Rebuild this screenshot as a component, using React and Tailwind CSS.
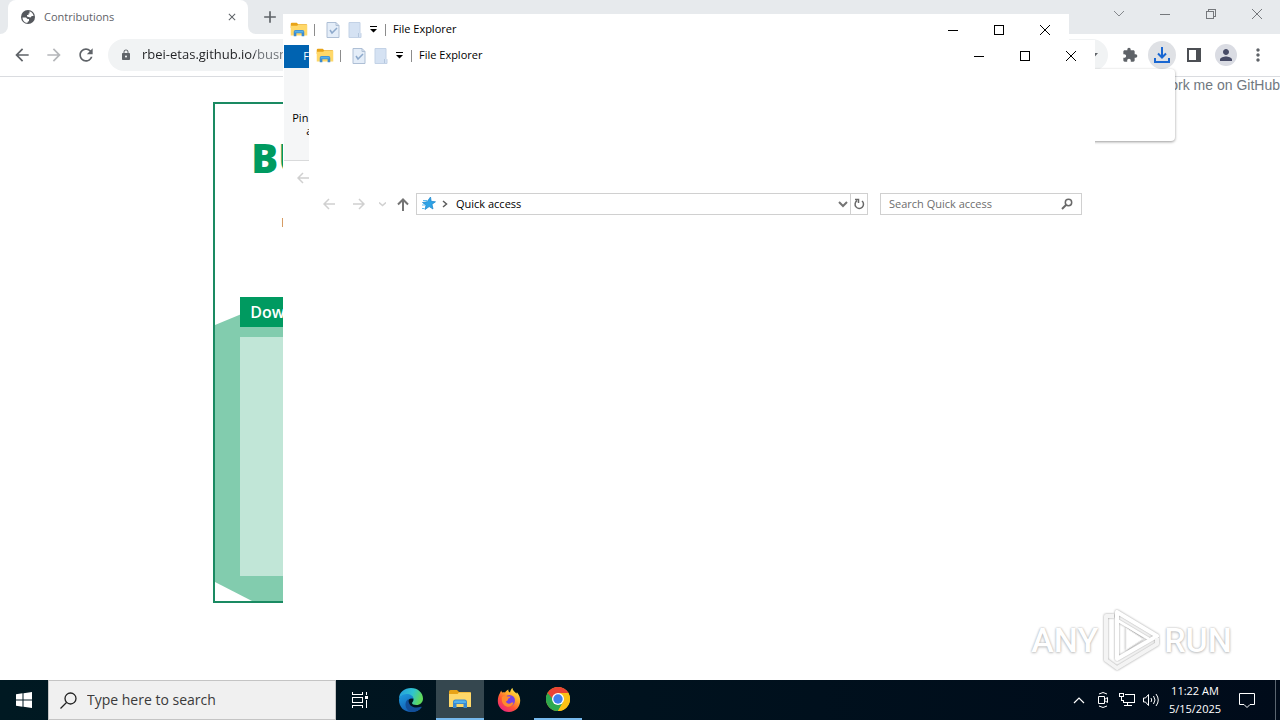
import React, { useState } from "react";
import {
  MdArrowBack,
  MdArrowForward,
  MdRefresh,
  MdLock,
  MdExtension,
  MdMoreVert,
  MdPerson,
  MdClose,
  MdAdd,
} from "react-icons/md";

function FolderIcon({ className }) {
  return (
    <svg viewBox="0 0 24 20" className={className} aria-hidden="true">
      <path d="M1 2.500Q1 1 2.500 1H9l2 2h11.500v5H1z" fill="#e8a317" />
      <path d="M1 5h8.500l1.500-1.500H23V18H1z" fill="#ffd869" />
      <path d="M5 19v-6q0-2.500 2.500-2.500h9Q19 10.500 19 13v6h-3.500v-4h-7v4z" fill="#3b8ad0" />
      <path d="M6 13q0-1.500 1.500-1.500h9q1.500 0 1.500 1.500v1H6z" fill="#55b1ea" />
    </svg>
  );
}

function GlobeIcon() {
  return (
    <svg width="16" height="16" viewBox="0 0 16 16" aria-hidden="true">
      <circle cx="8" cy="8" r="7" fill="#55585d" />
      <path d="M2.500 8.500h3.500l1.500 1.500h1.500v2l-1.500 1v1C4.500 13.800 2.500 11.500 2.500 8.500z" fill="#fff" />
      <path d="M9.500 2.300c2.200.7 3.800 2.500 4.100 4.700h-1.800l-1.300 1.500L8.500 8 7 7.500V6h1.500V4.500h1z" fill="#fff" />
    </svg>
  );
}

function WindowButtons({ restore = false, className = "" }) {
  return (
    <div className={`flex ${className}`}>
      <button aria-label="Minimize" className="flex w-[46px] items-center justify-center">
        <svg width="10" height="10" viewBox="0 0 10 10" stroke="currentColor" shapeRendering="crispEdges">
          <path d="M0 5.500h10" />
        </svg>
      </button>
      <button aria-label="Maximize" className="flex w-[46px] items-center justify-center">
        <svg width="10" height="10" viewBox="0 0 10 10" fill="none" stroke="currentColor" shapeRendering="crispEdges">
          {restore ? <path d="M.5 2.500h7v7h-7zM2.500 2.500v-2h7v7h-2" /> : <path d="M.5.5h9v9h-9z" />}
        </svg>
      </button>
      <button aria-label="Close" className="flex w-[46px] items-center justify-center">
        <svg width="10" height="10" viewBox="0 0 10 10" stroke="currentColor">
          <path d="M0 0l10 10M10 0L0 10" />
        </svg>
      </button>
    </div>
  );
}

function BrowserTabs() {
  return (
    <div className="flex h-[34px] shrink-0 bg-linear-to-b from-[#e7eaed] from-50% to-white to-50%">
      <div className="w-2 rounded-br-lg bg-[#e7eaed]" />
      <div className="flex w-60 items-center rounded-t-lg bg-white pr-2.5 pl-3 text-[#5f6368]">
        <GlobeIcon />
        <span className="ml-2 flex-1 text-[11px]">Contributions</span>
        <button aria-label="Close tab">
          <MdClose className="size-3" />
        </button>
      </div>
      <div className="flex flex-1 items-center rounded-bl-lg bg-[#e7eaed]">
        <button aria-label="New tab" className="ml-3 text-[#5f6368]">
          <MdAdd className="size-5" />
        </button>
        <button aria-label="Search tabs" className="ml-auto flex h-7 w-[46px] items-center justify-center self-start text-[#85888c]">
          <svg width="12" height="8" viewBox="0 0 12 8" fill="none" stroke="currentColor">
            <path d="M1 1l5 5 5-5" />
          </svg>
        </button>
        <WindowButtons restore className="h-7 self-start text-[#75787c]" />
      </div>
    </div>
  );
}

function BrowserToolbar() {
  const [url, setUrl] = useState("rbei-etas.github.io/busmaster/contributions.html");
  return (
    <div className="flex h-[43px] shrink-0 items-center border-b border-[#dadce0] bg-white pr-1.5 text-[#5f6368]">
      <button aria-label="Back" className="ml-3">
        <MdArrowBack className="size-5" />
      </button>
      <button aria-label="Forward" className="ml-3 text-[#b5b7ba]">
        <MdArrowForward className="size-5" />
      </button>
      <button aria-label="Reload" className="ml-3">
        <MdRefresh className="size-5" />
      </button>
      <div className="ml-3 flex h-8 flex-1 items-center rounded-full bg-[#f1f3f4] pr-1.5 pl-3">
        <MdLock className="size-3" />
        <input
          aria-label="Address"
          value={url}
          onChange={(e) => setUrl(e.target.value)}
          className="ml-[10px] flex-1 bg-linear-to-r from-[#202124] from-[113px] to-[#6b6f74] to-[113px] bg-clip-text text-[13px] text-transparent outline-none"
        />
        <svg width="14" height="8" viewBox="0 0 14 8" fill="currentColor">
          <path d="M3 2h7L6.500 6z" />
        </svg>
      </div>
      <div className="ml-1.5 flex">
        <button aria-label="Extensions" className="flex size-8 items-center justify-center">
          <MdExtension className="size-4" />
        </button>
        <button aria-label="Downloads" className="flex size-8 items-center justify-center">
          <span className="flex size-7 items-center justify-center rounded-full bg-[#dfe1e5]">
            <svg width="18" height="18" viewBox="0 0 18 18" fill="none" stroke="#1967d2" strokeWidth="2">
              <path d="M9 1v10M5 7.500l4 4 4-4M2 12v4h14v-4" />
            </svg>
          </span>
        </button>
        <button aria-label="Side panel" className="flex size-8 items-center justify-center">
          <svg width="14" height="14" viewBox="0 0 14 14">
            <path d="M1 1h12v12H1z" fill="none" stroke="#4c4f54" strokeWidth="2" />
            <path d="M9 1h5v12H9z" fill="#4c4f54" />
          </svg>
        </button>
        <button aria-label="Profile" className="flex size-8 items-center justify-center">
          <span className="flex size-[22px] items-center justify-center rounded-full bg-[#dadce3] text-[#474b66]">
            <MdPerson className="size-[18px]" />
          </span>
        </button>
        <button aria-label="Menu" className="flex size-8 items-center justify-center">
          <MdMoreVert className="size-5" />
        </button>
      </div>
    </div>
  );
}

function ProjectPage() {
  return (
    <main className="flex-1 bg-white">
      <a href="#fork" className="block h-[25px] text-right font-['Liberation_Sans',sans-serif] text-sm leading-4 text-[#70787f]">
        Fork me on GitHub
      </a>
      <section className="relative mx-auto h-[501px] w-2/3 overflow-hidden border-2 border-[#1a8a62]">
        <svg className="absolute top-0 left-0 h-full w-full" aria-hidden="true">
          <path d="M0 221L68 193L260 115H850V400L660 497H37L0 478Z" fill="#82ccae" />
        </svg>
        <div className="relative pl-[25px]">
          <h1 className="pt-[34px] pl-[11px] text-[40px] leading-10 font-extrabold text-[#009a60]">BUSMASTER</h1>
          <p className="mt-8 pl-[41px] text-[13px] leading-6 text-[#444]">Binary downloads of the project</p>
          <div className="mt-[63px] mr-6">
            <h2 className="h-[30px] bg-[#009a60] pl-[10px] text-base leading-[30px] font-semibold text-white">Download</h2>
            <div className="mt-[10px] h-[239px] bg-[#c1e6d7]" />
          </div>
        </div>
      </section>
    </main>
  );
}

function AnyRunMark() {
  return (
    <div className="pointer-events-none absolute right-12 bottom-12 flex items-center gap-1 font-[Roboto,sans-serif] text-[34px] leading-none font-medium text-white [text-shadow:0_0_2px_#aaa,0_1px_3px_#ccc]">
      <span>ANY</span>
      <svg width="58" height="64" viewBox="0 0 58 64" fill="none" className="drop-shadow-[0_0_1px_#999]">
        <path d="M15 4v47l40-23z" stroke="#fff" strokeWidth="4" strokeLinejoin="round" />
        <path d="M24 20v22l17-11z" fill="#fff" stroke="#eee" />
        <path d="M12 8H4v44l11 8 40-24v-6" stroke="#f4f4f4" strokeWidth="4" strokeLinejoin="round" />
        <path d="M15 12l32 19" stroke="#fff" strokeWidth="3" />
      </svg>
      <span>RUN</span>
    </div>
  );
}

function Ribbon() {
  return (
    <div className="h-[116px]">
      <button className="ml-px block h-[23px] w-14 bg-[#0063b1] text-center text-[11px] text-white">File</button>
      <div className="ml-px flex h-[93px] border-b border-[#d9dadb] bg-[#f5f6f7] pl-[7px]">
        <button className="mt-[43px] w-16 self-start text-center text-[11px] leading-[13px]">
          Pin to Quick access
        </button>
      </div>
    </div>
  );
}

function ExplorerWindow({ className, ribbon = false, location = "" }) {
  return (
    <section className={`absolute h-[600px] w-[786px] bg-white text-black ${className}`}>
      <header className="flex h-[31px] items-center pl-[7px]">
        <FolderIcon className="h-[15px] w-[18px]" />
        <span className="ml-1.5 h-3 w-px bg-[#8c8c8c]" />
        <button aria-label="Properties" className="ml-[11px]">
          <svg width="14" height="16" viewBox="0 0 14 16" fill="none">
            <path d="M1 .5h9l3 3v12H1z" fill="#e4edf8" stroke="#aebfd5" />
            <path d="M10 .5v3h3" stroke="#aebfd5" />
            <path d="M4 8l2 3 5-5" stroke="#8da9cb" strokeWidth="1.500" />
          </svg>
        </button>
        <button aria-label="New folder" className="ml-2">
          <svg width="14" height="16" viewBox="0 0 14 16">
            <path d="M1 .5h11v10l1 1v4H1z" fill="#d5e2f3" stroke="#c3d2e6" />
            <path d="M10.500 11v4" stroke="#b5c7de" />
          </svg>
        </button>
        <button aria-label="Customize toolbar" className="ml-2">
          <svg width="7" height="7" viewBox="0 0 7 7" fill="#000">
            <path d="M0 0h7v1H0zM0 3h7L3.500 6.500z" />
          </svg>
        </button>
        <span className="ml-2 h-3 w-px bg-[#8c8c8c]" />
        <span className="ml-[7px] text-[11px]">File Explorer</span>
        <WindowButtons className="mr-px ml-auto h-full" />
      </header>
      {ribbon ? <Ribbon /> : <div className="h-[116px]" />}
      <nav className="flex items-center py-1.5 pr-[13px] pl-[14px]">
        <button aria-label="Back">
          <svg width="13" height="12" viewBox="0 0 13 12" fill="none" stroke="#d0d0d0" strokeWidth="1.500">
            <path d="M12 6H1M6 1L1 6l5 5" />
          </svg>
        </button>
        <button aria-label="Forward" className="ml-4">
          <svg width="13" height="12" viewBox="0 0 13 12" fill="none" stroke="#d0d0d0" strokeWidth="1.500">
            <path d="M1 6h11M7 1l5 5-5 5" />
          </svg>
        </button>
        <button aria-label="Recent locations" className="ml-3.5">
          <svg width="7" height="5" viewBox="0 0 7 5" fill="none" stroke="#d0d0d0" strokeWidth="1.500">
            <path d="M0 .5l3.500 3L7 .5" />
          </svg>
        </button>
        <button aria-label="Up" className="ml-[11px]">
          <svg width="12" height="13" viewBox="0 0 12 13" fill="none" stroke="#747474" strokeWidth="2">
            <path d="M6 13V2M1 6.500l5-5 5 5" />
          </svg>
        </button>
        <div className="ml-[7px] flex h-[22px] flex-1 items-center border border-[#d0d0d0]">
          <svg width="14" height="14" viewBox="0 0 14 14" className="ml-[5px]">
            <path d="M8.500 0l.7 4.300 4.300.5-3.500 2.500 1 4.700-3.800-2.400L3 12.500l1-4.300L.5 5.500l4.600-.8z" fill="#2ea3e6" stroke="#1583cb" strokeWidth=".7" />
            <path d="M1 3.500h4M0 8h3M0 11.500h2.500" stroke="#5cbcf0" />
          </svg>
          <svg width="6" height="8" viewBox="0 0 6 8" fill="none" stroke="#5c5c5c" strokeWidth="1.500" className="ml-1.5">
            <path d="M1 1l3.500 3L1 7" />
          </svg>
          <button className="ml-2 flex-1 text-left text-[11px] leading-5">{location}</button>
          <button aria-label="Previous locations" className="mr-0.5">
            <svg width="10" height="7" viewBox="0 0 10 7" fill="none" stroke="#747474" strokeWidth="2">
              <path d="M1 1l4 4 4-4" />
            </svg>
          </button>
          <button aria-label="Refresh" className="flex h-full w-[17px] items-center justify-center border-l border-[#d0d0d0]">
            <svg width="12" height="12" viewBox="0 0 12 12" fill="none" stroke="#686868" strokeWidth="1.500">
              <path d="M9 3A4.200 4.200 0 1 1 4 2.700M2 1.500h3.500V5" />
            </svg>
          </button>
        </div>
        <label className="ml-3 flex h-[22px] w-[202px] items-center border border-[#d0d0d0] pr-2 pl-2">
          <input
            aria-label="Search"
            placeholder={location && `Search ${location}`}
            className="min-w-0 flex-1 text-[11px] outline-none placeholder:text-[#6d6d6d]"
          />
          <svg width="12" height="12" viewBox="0 0 12 12" fill="none" stroke="#686868" strokeWidth="1.500">
            <circle cx="7.500" cy="4.500" r="3.200" />
            <path d="M5 7L1 11" strokeWidth="2" />
          </svg>
        </label>
      </nav>
    </section>
  );
}

function EdgeIcon() {
  return (
    <svg width="26" height="26" viewBox="0 0 26 26">
      <defs>
        <linearGradient id="edgeTop" x1="0" y1="0" x2="1" y2="0.300">
          <stop offset="0" stopColor="#2499df" />
          <stop offset="0.600" stopColor="#2fc4cf" />
          <stop offset="1" stopColor="#5fd95c" />
        </linearGradient>
        <linearGradient id="edgeBody" x1="0" y1="0" x2="0.600" y2="1">
          <stop offset="0" stopColor="#1d9de0" />
          <stop offset="1" stopColor="#1357ae" />
        </linearGradient>
      </defs>
      <path d="M1 12C1 5 6.500 1 13 1c7 0 12 5 12 10.500 0 4-3 6.500-6.500 6.500-3 0-4.500-1-4.500-2 0-.8 1.500-1.200 1.500-3.500C15.500 9.500 12 8 8.500 8 5 8 2 9.500 1 12z" fill="url(#edgeTop)" />
      <path d="M1 13c0-3 3.500-6 7.500-6 4 0 7 2 7 5-3-1.500-6 .5-6 4 0 4.500 4 7 8 7 2.500 0 4.500-1 6-2.500C21.500 23.500 17.500 25 13 25 6 25 1 20 1 13z" fill="url(#edgeBody)" />
      <path d="M10.500 12C8.500 13 7.500 15 7.500 17.500c0 4 3 7 6 7.500 4.500 0 8-2 10-4.500.4-.6 0-1-.6-.7C16.500 22 10 19.500 10.500 12z" fill="#124f99" />
    </svg>
  );
}

function FirefoxIcon() {
  return (
    <svg width="24" height="24" viewBox="0 0 24 24">
      <defs>
        <linearGradient id="foxFire" x1="0.900" y1="0" x2="0.200" y2="1">
          <stop offset="0" stopColor="#fff44f" />
          <stop offset="0.350" stopColor="#ffb02a" />
          <stop offset="0.650" stopColor="#ff5634" />
          <stop offset="1" stopColor="#e91e88" />
        </linearGradient>
      </defs>
      <path d="M3 5c.3-1 .7-1.800 1.400-2.500.1 1 .3 1.500.8 2C6 4.300 7 4.200 8 4.500 9 3 10 2 11.500 1.500 11 3 11.500 3.700 13 4.500 13.500 2.500 14 1 15.500 0c.2 2.500 2 3.500 4 5.500.4-.5.300-1 .2-1.500 2.300 2.400 3.500 5.500 3.500 8.500C23.200 19 18.500 24 12 24S.8 19 .8 13C.8 10 1.500 7 3 5z" fill="url(#foxFire)" />
      <circle cx="12.500" cy="12.500" r="5.500" fill="#7542e5" />
      <path d="M5 9c2-2 4-1.500 5.500-.5h3c-.5 1.500-1.500 2-2.500 2.300.2 1.200-.5 2-2 2.700.5 2 3 3 5 1.500 1-.7 2-.5 2.500 0-1 3-4 4.500-7 3.500C6 17.500 4 13.500 5 9z" fill="#ff8b2d" />
    </svg>
  );
}

function ChromeIcon() {
  return (
    <svg width="24" height="24" viewBox="0 0 24 24">
      <circle cx="12" cy="12" r="12" fill="#fbc116" />
      <path d="M12 12L1.600 6A12 12 0 0 0 12 24l5.200-9z" fill="#2da94f" />
      <path d="M12 12H6.800L1.600 6a12 12 0 0 1 20.800 0z" fill="#ea4335" />
      <path d="M12 6h10.400A12 12 0 0 1 12 24l5.200-9z" fill="#fbc116" />
      <circle cx="12" cy="12" r="6" fill="#fff" />
      <circle cx="12" cy="12" r="4.700" fill="#3f7fec" />
    </svg>
  );
}

function TaskView() {
  return (
    <svg width="18" height="16" viewBox="0 0 18 16" fill="none" stroke="#fff" shapeRendering="crispEdges">
      <path d="M1.500 0v2.500h10V0M1.500 5.500h10v5h-10zM1.500 16v-2.500h10V16M15.500 0v3M15.500 8v8" />
      <path d="M14 4h3v3h-3z" fill="#fff" stroke="none" />
    </svg>
  );
}

const apps = [
  { name: "Task View", icon: <TaskView />, style: "mr-0.5" },
  { name: "Microsoft Edge", icon: <EdgeIcon />, style: "" },
  { name: "File Explorer", icon: <FolderIcon className="h-5 w-6" />, style: "border-b-2 border-[#76b9ed] bg-[#35474f]" },
  { name: "Firefox", icon: <FirefoxIcon />, style: "" },
  { name: "Google Chrome", icon: <ChromeIcon />, style: "border-b-2 border-[#76b9ed]" },
];

function Taskbar() {
  return (
    <footer className="relative flex h-10 shrink-0 bg-linear-to-r from-[#001922] to-[#000b1a] text-white">
      <button aria-label="Start" className="flex w-12 items-center justify-center">
        <svg width="16" height="16" viewBox="0 0 16 16" fill="#fff">
          <path d="M0 2.300L6.500 1.300V7.500H0zM7.500 1.200L16 0v7.500H7.500zM0 8.500h6.500v6.200L0 13.700zM7.500 8.500H16V16l-8.500-1.200z" />
        </svg>
      </button>
      <label className="flex w-72 items-center border border-[#c4c4c4] bg-[#f0f0f0] pl-[11px]">
        <svg width="17" height="17" viewBox="0 0 17 17" fill="none" stroke="#222" strokeWidth="1.300">
          <circle cx="10.500" cy="6.500" r="5.500" />
          <path d="M6.500 10.500L.5 16.500" />
        </svg>
        <input
          aria-label="Type here to search"
          placeholder="Type here to search"
          className="ml-[10px] min-w-0 flex-1 text-sm outline-none placeholder:text-[#3a3a3a]"
        />
      </label>
      <div className="flex gap-px">
        {apps.map((app) => (
          <button key={app.name} aria-label={app.name} className={`flex w-12 items-center justify-center ${app.style}`}>
            {app.icon}
          </button>
        ))}
      </div>
      <div className="ml-auto flex items-center">
        <button aria-label="Show hidden icons" className="flex w-6 justify-center">
          <svg width="12" height="8" viewBox="0 0 12 8" fill="none" stroke="#fff" strokeWidth="1.200">
            <path d="M1 7l5-5 5 5" />
          </svg>
        </button>
        <button aria-label="Meet now" className="flex w-6 justify-center">
          <svg width="14" height="16" viewBox="0 0 14 16" fill="none" stroke="#fff">
            <path d="M2.500 4.500h6v7h-6zM8.500 7.500l3-2v5l-3-2M3 2q4-3 8 0M3 14q4 3 8 0" />
          </svg>
        </button>
        <button aria-label="Network" className="flex w-6 justify-center">
          <svg width="16" height="14" viewBox="0 0 16 14" fill="none" stroke="#fff" shapeRendering="crispEdges">
            <path d="M6 1.500h9.500v8H4.500V7M8.500 10v3M5 12.500h8M.5.5h4v3h-4zM2.500 4v3h2" />
          </svg>
        </button>
        <button aria-label="Volume" className="flex w-6 justify-center">
          <svg width="17" height="14" viewBox="0 0 17 14" fill="none" stroke="#fff">
            <path d="M.5 5h2l3-3.500v11L2.500 9h-2zM8 5q1.500 2 0 4M10.500 3q3 4 0 8M13 1q4.500 6 0 12" />
          </svg>
        </button>
        <div className="w-16 text-center text-[11px] leading-[18px]">
          <div>11:22 AM</div>
          <div>5/15/2025</div>
        </div>
        <button aria-label="Notifications" className="flex w-10 justify-center">
          <svg width="16" height="16" viewBox="0 0 16 16" fill="none" stroke="#fff">
            <path d="M.5 1.500h15v11H11L8 15.500l-3-3H.5z" />
          </svg>
        </button>
        <span className="ml-2 h-10 w-[5px] border-l border-[#5a6570]" />
      </div>
    </footer>
  );
}

function App() {
  return (
    <div className="relative flex h-screen flex-col overflow-hidden bg-white font-['Open_Sans','Noto_Sans',sans-serif]">
      <BrowserTabs />
      <BrowserToolbar />
      <ProjectPage />
      <div className="absolute top-[69px] right-[105px] h-[72px] w-80 rounded bg-white shadow-[0_1px_3px_rgba(0,0,0,0.4)]" />
      <ExplorerWindow ribbon className="top-[14px] left-[283px]" />
      <ExplorerWindow location="Quick access" className="top-10 left-[309px]" />
      <AnyRunMark />
      <Taskbar />
    </div>
  );
}

export default App;
